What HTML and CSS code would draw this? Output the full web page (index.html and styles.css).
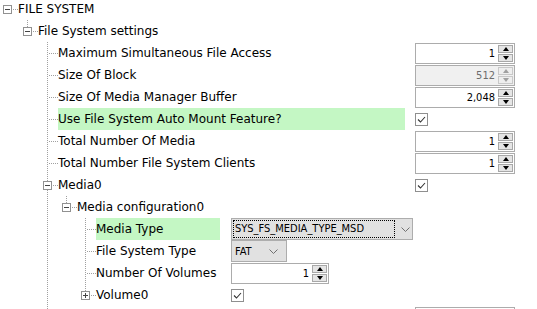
FILE: index.html
```html
<!DOCTYPE html>
<html>
<head>
<meta charset="utf-8">
<link rel="stylesheet" href="styles.css">
</head>
<body>
<div class="tree">
  <div class="row">
    <span class="c h"><svg class="box" width="9" height="9"><rect x=".5" y=".5" width="8" height="8" fill="#fff" stroke="#919191"/><path d="M2 4.5h5" stroke="#444"/></svg></span>
    <span class="label">FILE SYSTEM</span>
  </div>
  <div class="row">
    <span class="c"></span>
    <span class="c l"><svg class="box" width="9" height="9"><rect x=".5" y=".5" width="8" height="8" fill="#fff" stroke="#919191"/><path d="M2 4.5h5" stroke="#444"/></svg></span>
    <span class="label">File System settings</span>
  </div>
  <div class="row">
    <span class="c"></span><span class="c"></span><span class="c t"></span>
    <span class="label">Maximum Simultaneous File Access</span>
    <span class="val"><span class="spinner"><span class="num">1</span><span class="spin"><span class="btn up"></span><span class="btn down"></span></span></span></span>
  </div>
  <div class="row">
    <span class="c"></span><span class="c"></span><span class="c t"></span>
    <span class="label">Size Of Block</span>
    <span class="val"><span class="spinner disabled"><span class="num">512</span><span class="spin"><span class="btn up"></span><span class="btn down"></span></span></span></span>
  </div>
  <div class="row">
    <span class="c"></span><span class="c"></span><span class="c t"></span>
    <span class="label">Size Of Media Manager Buffer</span>
    <span class="val"><span class="spinner"><span class="num">2,048</span><span class="spin"><span class="btn up"></span><span class="btn down"></span></span></span></span>
  </div>
  <div class="row">
    <span class="c"></span><span class="c"></span><span class="c t"></span>
    <span class="label hl">Use File System Auto Mount Feature?</span>
    <span class="val"><svg class="check" width="13" height="13"><rect x=".5" y=".5" width="12" height="12" fill="#fff" stroke="#8f8f8f"/><path d="M3 6.5l2.5 2.5l4.5-5" fill="none" stroke="#333" stroke-width="1.1"/></svg></span>
  </div>
  <div class="row">
    <span class="c"></span><span class="c"></span><span class="c t"></span>
    <span class="label">Total Number Of Media</span>
    <span class="val"><span class="spinner"><span class="num">1</span><span class="spin"><span class="btn up"></span><span class="btn down"></span></span></span></span>
  </div>
  <div class="row">
    <span class="c"></span><span class="c"></span><span class="c t"></span>
    <span class="label">Total Number File System Clients</span>
    <span class="val"><span class="spinner"><span class="num">1</span><span class="spin"><span class="btn up"></span><span class="btn down"></span></span></span></span>
  </div>
  <div class="row">
    <span class="c"></span><span class="c"></span>
    <span class="c t"><svg class="box" width="9" height="9"><rect x=".5" y=".5" width="8" height="8" fill="#fff" stroke="#919191"/><path d="M2 4.5h5" stroke="#444"/></svg></span>
    <span class="label">Media0</span>
    <span class="val"><svg class="check" width="13" height="13"><rect x=".5" y=".5" width="12" height="12" fill="#fff" stroke="#8f8f8f"/><path d="M3 6.5l2.5 2.5l4.5-5" fill="none" stroke="#333" stroke-width="1.1"/></svg></span>
  </div>
  <div class="row">
    <span class="c"></span><span class="c"></span><span class="c p"></span>
    <span class="c l"><svg class="box" width="9" height="9"><rect x=".5" y=".5" width="8" height="8" fill="#fff" stroke="#919191"/><path d="M2 4.5h5" stroke="#444"/></svg></span>
    <span class="label">Media configuration0</span>
  </div>
  <div class="row">
    <span class="c"></span><span class="c"></span><span class="c p"></span><span class="c"></span><span class="c t"></span>
    <span class="label sub hl">Media Type</span>
    <span class="val sub">
      <span class="combo wide"><span class="focus">SYS_FS_MEDIA_TYPE_MSD</span><svg class="chev" width="9" height="5"><path d="M.5 .5l4 4l4-4" fill="none" stroke="#707070"/></svg></span>
    </span>
  </div>
  <div class="row">
    <span class="c"></span><span class="c"></span><span class="c p"></span><span class="c"></span><span class="c t"></span>
    <span class="label sub">File System Type</span>
    <span class="val sub">
      <span class="combo narrow"><span class="text">FAT</span><svg class="chev" width="9" height="5"><path d="M.5 .5l4 4l4-4" fill="none" stroke="#707070"/></svg></span>
    </span>
  </div>
  <div class="row">
    <span class="c"></span><span class="c"></span><span class="c p"></span><span class="c"></span><span class="c t"></span>
    <span class="label sub">Number Of Volumes</span>
    <span class="val sub"><span class="spinner small"><span class="num">1</span><span class="spin"><span class="btn up"></span><span class="btn down"></span></span></span></span>
  </div>
  <div class="row">
    <span class="c"></span><span class="c"></span><span class="c p"></span><span class="c"></span>
    <span class="c l"><svg class="box" width="9" height="9"><rect x=".5" y=".5" width="8" height="8" fill="#fff" stroke="#919191"/><path d="M2 4.5h5M4.5 2v5" stroke="#444"/></svg></span>
    <span class="label sub">Volume0</span>
    <span class="val sub"><svg class="check" width="13" height="13"><rect x=".5" y=".5" width="12" height="12" fill="#fff" stroke="#8f8f8f"/><path d="M3 6.5l2.5 2.5l4.5-5" fill="none" stroke="#333" stroke-width="1.1"/></svg></span>
  </div>
  <div class="row">
    <span class="c"></span><span class="c"></span><span class="c t"></span>
    <span class="label"></span>
    <span class="val"><span class="spinner"><span class="num"></span><span class="spin"><span class="btn up"></span><span class="btn down"></span></span></span></span>
  </div>
</div>
</body>
</html>
```
FILE: styles.css
```css
html, body {
  margin: 0;
  padding: 0;
  background: #fff;
  overflow: hidden;
  height: 100%;
}
body {
  font-family: "DejaVu Sans", Verdana, sans-serif;
  font-size: 12px;
  color: #000;
}
.tree {
  margin-top: -2px;
  margin-left: -2px;
}
.row {
  display: flex;
  height: 22px;
  align-items: flex-start;
}
.c {
  --x: 9px;
  flex: none;
  width: 20px;
  height: 22px;
  display: block;
}
.row > .c:nth-child(n+4) {
  --x: 8px;
  width: 19px;
}
.p {
  background: repeating-linear-gradient(to bottom, #a0a0a0 0 1px, transparent 1px 2px) var(--x) 0 / 1px 100% no-repeat;
}
.t {
  background:
    repeating-linear-gradient(to right, #a0a0a0 0 1px, transparent 1px 2px) calc(var(--x) + 2px) 11px / 100% 1px no-repeat,
    repeating-linear-gradient(to bottom, #a0a0a0 0 1px, transparent 1px 2px) var(--x) 0 / 1px 100% no-repeat;
}
.l {
  background:
    repeating-linear-gradient(to right, #a0a0a0 0 1px, transparent 1px 2px) calc(var(--x) + 2px) 11px / 100% 1px no-repeat,
    repeating-linear-gradient(to bottom, #a0a0a0 0 1px, transparent 1px 2px) var(--x) 0 / 1px 11px no-repeat;
}
.h {
  background: repeating-linear-gradient(to right, #a0a0a0 0 1px, transparent 1px 2px) calc(var(--x) + 4px) 11px / 100% 1px no-repeat;
}
.box {
  display: block;
  margin-left: calc(var(--x) - 4px);
  margin-top: 7px;
}
.label {
  flex: 1;
  min-width: 0;
  line-height: 22px;
  height: 22px;
  white-space: nowrap;
  margin-right: 10px;
}
.label.sub {
  flex: none;
  width: 124px;
  margin-right: 11px;
}
.hl {
  background: #c4f7c4;
}
.val {
  flex: none;
  width: 122px;
  height: 22px;
  display: flex;
  align-items: flex-start;
}
.val.sub {
  flex: 1;
  width: auto;
}
.check {
  display: block;
  margin-top: 5px;
}
.spinner {
  margin-top: 1px;
  box-sizing: border-box;
  width: 100px;
  height: 21px;
  border: 1px solid #acacac;
  background: #fff;
  display: flex;
  font-family: "DejaVu Sans Condensed", "DejaVu Sans", sans-serif;
  font-stretch: condensed;
  font-size: 11px;
}
.spinner.small {
  width: 98px;
}
.spinner.disabled {
  background: #f0f0f0;
  color: #6d6d6d;
}
.num {
  flex: 1;
  text-align: right;
  line-height: 19px;
  padding-right: 2px;
}
.spin {
  flex: none;
  width: 15px;
  margin: 1px;
  display: flex;
  flex-direction: column;
  gap: 1px;
}
.btn {
  flex: 1;
  box-sizing: border-box;
  border: 1px solid #a8a8a8;
  background: #e5e5e5;
  display: flex;
  align-items: center;
  justify-content: center;
}
.btn::after {
  content: "";
  width: 0;
  height: 0;
  border-left: 3.5px solid transparent;
  border-right: 3.5px solid transparent;
}
.btn.up::after {
  border-bottom: 4px solid #000;
}
.btn.down::after {
  border-top: 4px solid #000;
}
.disabled .btn {
  border-color: #c8c8c8;
  background: #eeeeee;
}
.disabled .btn.up::after {
  border-bottom-color: #a0a0a0;
}
.disabled .btn.down::after {
  border-top-color: #a0a0a0;
}
.combo {
  box-sizing: border-box;
  height: 22px;
  border: 1px solid #adadad;
  background: #e1e1e1;
  display: flex;
  align-items: center;
  font-family: "DejaVu Sans Condensed", "DejaVu Sans", sans-serif;
  font-stretch: condensed;
  font-size: 11px;
}
.combo.wide {
  width: 182px;
}
.combo.narrow {
  width: 56px;
}
.focus {
  box-sizing: border-box;
  width: 162px;
  height: 18px;
  line-height: 16px;
  border: 1px dotted #000;
  margin-left: 1px;
  padding-left: 1px;
}
.combo .text {
  flex: 1;
  padding-left: 3px;
}
.combo .chev {
  display: block;
  margin-left: 6px;
}
.combo.narrow .chev {
  margin: 0 8px 0 0;
}
```
